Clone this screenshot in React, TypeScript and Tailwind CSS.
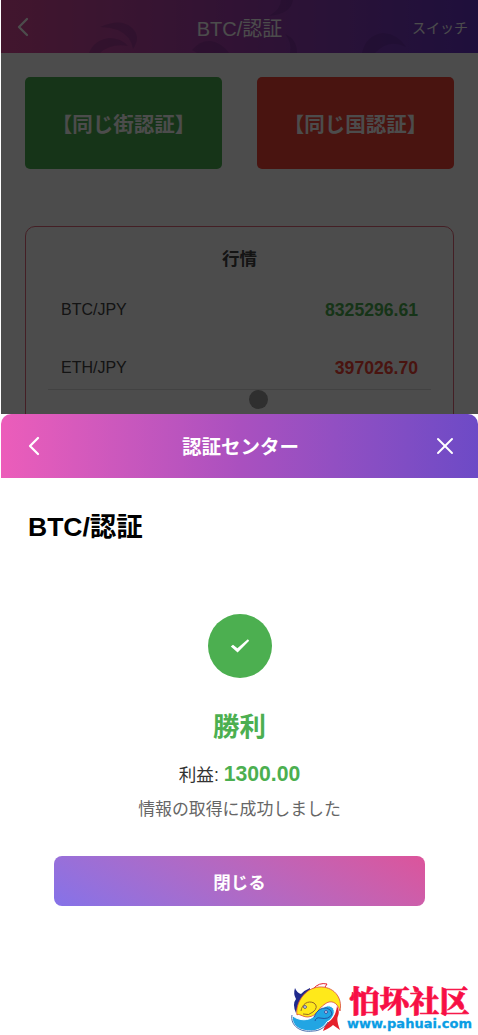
import { ChevronLeft, X } from "lucide-react";

const pairs = [
  { name: "BTC/JPY", price: "8325296.61", up: true },
  { name: "ETH/JPY", price: "397026.70", up: false },
];

function FishLogo() {
  return (
    <svg viewBox="0 0 60 52" className="h-[52px] w-[60px] flex-none">
      {/* Tail of the yellow fish */}
      <path d="M8 6 Q10 11 14 12 Q18 8 23 6 Q24 12 17 17 Q11 22 9 31 Q5 22 9 17 Q6 12 8 6Z" fill="#1f2a8c" />
      <path d="M26 7 Q32 0 40 2 L38 5" fill="none" stroke="#e5232e" strokeWidth="1" />
      <path
        d="M10 33 C8 21 18 6 32 5 C46 4 56 15 53 29 C50 19 43 18 38 22 C30 27 31 34 21 35 C15 35 12 31 10 33Z"
        fill="#ffe91a"
        stroke="#d8483a"
        strokeWidth="0.8"
      />
      <path d="M14 29 C15 22 21 18 27 21 Q32 25 26 30 Q22 34 16 32" fill="#ffe91a" stroke="#8a5a26" strokeWidth="0.9" />
      {/* Tail of the blue fish */}
      <path d="M50 24 Q53 29 51 34 Q49 38 53 48 L46 43 Q43 46 36 49 Q38 42 44 38 Q49 33 50 24Z" fill="#e5202b" />
      <path
        d="M6 34 C12 39 22 39 27 34 C33 28 39 21 45 25 C50 29 46 37 40 40 C35 49 23 51 13 47 C7 44 4 38 6 34Z"
        fill="#22a5e3"
        stroke="#fff"
        strokeWidth="1"
      />
      <path d="M27 35 Q31 25 40 26 Q45 28 45 32 Q42 38 33 36 Q29 35 28 39" fill="#22a5e3" stroke="#1f4d9c" strokeWidth="0.9" />
      <path d="M5 33 C3 43 13 51 26 49 C33 49 38 45 41 40" fill="none" stroke="#1f4d9c" strokeWidth="0.8" />
      <circle cx="18" cy="25" r="1.4" fill="#fff" stroke="#1f2a8c" strokeWidth="0.8" />
      <circle cx="39" cy="30" r="1.4" fill="#fff" stroke="#1f2a8c" strokeWidth="0.8" />
    </svg>
  );
}

function TradePage() {
  return (
    <div className="h-[414px] overflow-hidden bg-white">
      <header className="relative flex h-[53px] items-center justify-between overflow-hidden bg-linear-to-r from-[#dd4a98] via-[#a13eae] to-[#6733c8] px-[10px] text-white">
        {/* Faint ribbons behind the title */}
        <svg viewBox="0 0 477 53" className="absolute inset-0 h-full w-full" fill="#4a1a70" fillOpacity="0.22">
          <path d="M99 27 Q119 18 130 27 Q141 36 132 49 Q130 36 117 30 Q108 27 99 27Z" />
          <path d="M88 53 Q93 40 108 38 Q120 38 127 46 Q110 43 99 53Z" />
          <path d="M191 50 Q199 40 210 41 Q221 43 228 53 L196 53Z" />
          <path d="M280 0 H292 Q290 14 268 16 Q280 9 280 0Z" />
          <path d="M284 34 Q296 39 296 53 H289 Q291 42 284 34Z" />
          <path d="M361 53 Q365 35 382 33 Q397 34 405 47 Q388 38 374 53Z" />
        </svg>
        <div className="relative flex-1">
          <ChevronLeft className="-ml-1 h-8 w-8" strokeWidth={1.7} />
        </div>
        <h1 className="relative pt-1 text-[20px]">BTC/認証</h1>
        <div className="relative flex-1 pt-1 text-right text-[14px]">スイッチ</div>
      </header>

      <div className="flex gap-[35px] px-6 pt-6">
        <button className="h-[92px] flex-1 rounded-[5px] bg-[#4caf50] pt-1 text-[20.5px] font-bold whitespace-nowrap text-white">
          【同じ街認証】
        </button>
        <button className="h-[92px] flex-1 rounded-[5px] bg-[#f44336] pt-1 text-[20.5px] font-bold whitespace-nowrap text-white">
          【同じ国認証】
        </button>
      </div>

      <section className="mx-6 mt-[57px] h-[260px] rounded-[10px] border border-[#e46a7c] px-[22px] pt-[19px] text-[#444]">
        <h2 className="text-center text-[17.5px] leading-[26px] font-bold">行情</h2>
        <div className="mt-[16px]">
          {pairs.map((pair) => (
            <div
              key={pair.name}
              className="mb-[14px] flex h-[44px] items-center justify-between border-b border-transparent px-[13px] last:border-[#dcdcdc]"
            >
              <span className="text-[16px]">{pair.name}</span>
              <span
                className={
                  pair.up
                    ? "pt-px text-[17.6px] font-bold text-[#4caf50]"
                    : "pt-px text-[17.6px] font-bold text-[#f44336]"
                }
              >
                {pair.price}
              </span>
            </div>
          ))}
        </div>
      </section>
    </div>
  );
}

function ResultSheet() {
  return (
    <div className="flex h-[621px] flex-col bg-white">
      <header className="flex h-16 items-center justify-between rounded-t-[10px] bg-linear-to-r from-[#ec5dba] via-[#aa50bf] to-[#6d4ac6] pr-[19px] pl-[17px] text-white">
        <ChevronLeft className="h-8 w-8" strokeWidth={1.7} />
        <h2 className="pt-[3px] text-[19.5px] font-bold">認証センター</h2>
        <X className="h-7 w-7" strokeWidth={1.7} />
      </header>

      <h3 className="mt-[29px] pl-[27px] text-[26.5px] leading-[40px] font-bold text-black">BTC/認証</h3>

      <div className="mt-[67px] flex flex-col items-center">
        <div className="flex h-16 w-16 items-center justify-center rounded-full bg-[#4caf50]">
          <svg viewBox="0 0 20 16" className="h-4 w-5" fill="#fff">
            <path d="M0.8 8.6 L3 6.8 L7.4 10.2 L17.8 1.2 L19.2 2.7 L7.6 14.6Z" />
          </svg>
        </div>
        <p className="mt-[29px] text-[26.5px] leading-[40px] font-bold text-[#4caf50]">勝利</p>
        <p className="mt-[13px] text-[17.6px] leading-[28px] text-[#333]">
          利益: <span className="text-[21.2px] font-bold text-[#4caf50]">1300.00</span>
        </p>
        <p className="mt-[8px] text-[16.9px] leading-[26px] text-[#666]">情報の取得に成功しました</p>
      </div>

      <button className="mx-[53px] mt-[33px] h-[50px] rounded-[8px] bg-linear-30 from-[#8572e8] to-[#dc549b] pt-1 text-[17.5px] font-bold text-white">
        閉じる
      </button>

      <footer className="mt-auto flex h-[53px] justify-end pr-1.5">
        <FishLogo />
        <div className="flex flex-col items-center">
          <span className="font-['Noto_Serif_CJK_SC','Noto_Sans_CJK_SC',serif] text-[30px] leading-[34px] font-black text-[#f70f45] [-webkit-text-stroke:0.6px_#f70f45]">
            怕坏社区
          </span>
          <span className="font-['DejaVu_Sans',sans-serif] text-[13px] leading-[15px] font-bold text-[#0a9de4] [-webkit-text-stroke:0.3px_#0a9de4]">
            www.pahuai.com
          </span>
        </div>
      </footer>
    </div>
  );
}

export default function App() {
  return (
    <div className="h-[1035px] w-[478px] overflow-hidden bg-white pl-px font-['Liberation_Sans','Noto_Sans_CJK_JP',sans-serif]">
      <div className="relative">
        <TradePage />
        <div className="absolute inset-0 bg-black/70" />
        <span className="absolute top-[390px] left-[248px] h-[19px] w-[19px] rounded-full bg-[#2f2f2f]" />
      </div>
      <ResultSheet />
    </div>
  );
}
